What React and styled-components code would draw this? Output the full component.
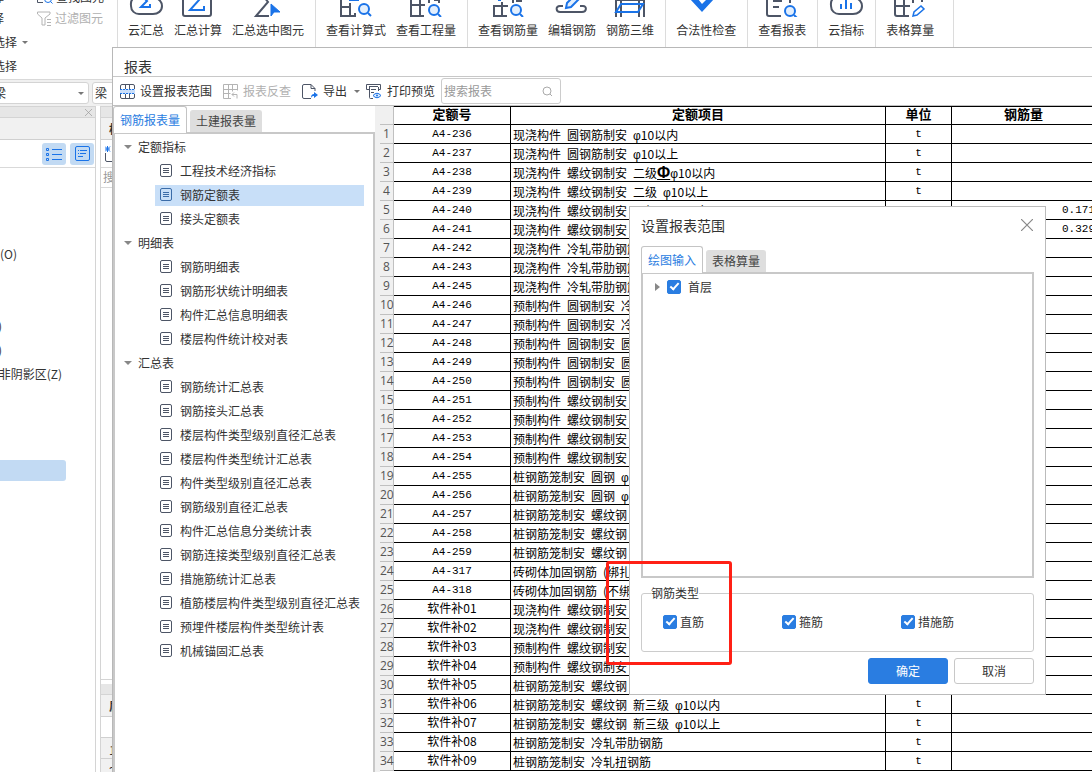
import React, { useState } from "react";
import styled, { createGlobalStyle } from "styled-components";

const GlobalStyle = createGlobalStyle`
  * {
    box-sizing: border-box;
  }
  body {
    margin: 0;
    overflow: hidden;
    background: #fff;
    color: #333;
    font-family: "Noto Sans CJK SC", sans-serif;
    font-size: 12px;
    line-height: 18px;
  }
  button, input, select {
    font: inherit;
    color: inherit;
    margin: 0;
  }
`;

const Screen = styled.div`
  position: relative;
  height: 100vh;
  overflow: hidden;
`;

/* ---------- main window ---------- */

const Main = styled.div`
  display: flex;
  flex-direction: column;
  height: 100%;
`;

const Ribbon = styled.header`
  display: flex;
  height: 80px;
  border-bottom: 1px solid #d9d9d9;
`;

const SelectTools = styled.div`
  width: 118px;
  margin-top: -18px;
  border-right: 1px solid #dcdcdc;
  overflow: hidden;
`;

const ToolLine = styled.div`
  display: flex;
  align-items: ${(props) => (props.$low ? "flex-end" : "center")};
  height: 24px;
`;

const ToolCut = styled.button`
  display: flex;
  justify-content: flex-end;
  width: ${(props) => (props.$short ? 4 : 17)}px;
  margin-right: ${(props) => (props.$short ? 33 : 5)}px;
  padding: 0;
  border: none;
  background: none;
  white-space: nowrap;
  overflow: hidden;
`;

const ToolButton = styled.button`
  display: flex;
  align-items: center;
  gap: 3px;
  padding: 0;
  border: none;
  background: none;
  white-space: nowrap;
  color: ${(props) => (props.disabled ? "#b0b0b0" : "#333")};
`;

const Caret = styled.span`
  border: 3px solid transparent;
  border-top-color: #777;
  border-bottom: none;
`;

const Group = styled.div`
  display: flex;
  gap: 10px;
  min-width: ${(props) => (props.$wide ? 78 : 0)}px;
  padding: 0 11px 0 10px;
  border-right: 1px solid #dcdcdc;
`;

const RibbonButton = styled.button`
  display: flex;
  flex-direction: column;
  align-items: center;
  gap: 4px;
  padding: 0;
  border: none;
  background: none;
  white-space: nowrap;

  svg {
    display: block;
  }
`;

const ComboBar = styled.div`
  display: flex;
  gap: 3px;
  margin-left: -14px;
  padding: 2px 0;
  background: #f0f0f0;
`;

const Combo = styled.select`
  appearance: none;
  width: 103px;
  height: 22px;
  padding: 0 3px 0 ${(props) => props.$indent}px;
  border: 1px solid #d4d4d4;
  border-radius: 3px;
  background: #fff;
`;

const ComboBox = styled.label`
  display: flex;
  align-items: center;

  span {
    margin-left: -11px;
    margin-right: 5px;
  }
`;

const Docks = styled.div`
  display: flex;
  flex: 1;
  gap: 4px;
  min-height: 0;
`;

const Dock = styled.aside`
  width: ${(props) => props.$width}px;
  border: 1px solid #d4d4d4;
  border-left-width: ${(props) => (props.$first ? 0 : 1)}px;
  border-bottom: none;
`;

const DockTitle = styled.div`
  display: flex;
  align-items: center;
  justify-content: flex-end;
  height: 11px;
  padding-right: 3px;
  background: #e6e6e6;
  border-bottom: 1px solid #d4d4d4;
`;

const DockBand = styled.div`
  display: flex;
  align-items: center;
  height: 22px;
  padding-left: 8px;
  overflow: hidden;
  background: #f1f1f1;
  border-bottom: 1px solid #d0d0d0;
  font-weight: bold;
`;

const DockTools = styled.div`
  display: flex;
  align-items: center;
  justify-content: ${(props) => (props.$start ? "flex-start" : "flex-end")};
  gap: 4px;
  height: 28px;
  padding: 0 1px 0 4px;
  border-bottom: 1px solid #d9d9d9;
`;

const ToggleButton = styled.button`
  display: flex;
  align-items: center;
  justify-content: center;
  width: 24px;
  height: 22px;
  padding: 0;
  border: none;
  border-radius: 3px;
  background: #c2daf3;
`;

const DockSearch = styled.div`
  height: 20px;
  padding-left: 2px;
  color: #999;
  border-bottom: 1px solid #d9d9d9;
`;

const DockBlank = styled.div`
  height: 492px;
  border-bottom: 1px solid #d4d4d4;
  margin-bottom: 4px;
`;

const DockRow = styled.div`
  height: 21px;
  padding: 3px 0 0 8px;
  background: ${(props) => (props.$blank ? "#fff" : "#f1f1f1")};
  border-bottom: 1px solid #d0d0d0;
`;

const NavList = styled.ul`
  margin: 0;
  padding: 74px 0 0;
  list-style: none;
`;

const NavItem = styled.li`
  display: flex;
  align-items: center;
  justify-content: flex-end;
  width: ${(props) => props.$width}px;
  height: 24px;
  white-space: nowrap;
  overflow: hidden;
`;

const NavMark = styled.li`
  width: 66px;
  height: 21px;
  margin-top: 2px;
  border-radius: 0 3px 3px 0;
  background: #c2daf3;
`;

/* ---------- report window ---------- */

const ReportWindow = styled.section`
  position: absolute;
  top: 47px;
  left: 112px;
  right: 0;
  bottom: 0;
  display: flex;
  flex-direction: column;
  background: #fff;
  border-top: 1px solid #b8b8b8;
  border-left: 1px solid #b8b8b8;
`;

const WindowTitle = styled.h1`
  height: 29px;
  margin: 0;
  padding: 9px 0 0 11px;
  border-bottom: 1px solid #c8c8c8;
  font-size: 14px;
  font-weight: normal;
`;

const Toolbar = styled.div`
  display: flex;
  align-items: center;
  height: 29px;
  padding-left: 7px;
  border-bottom: 1px solid #c0c0c0;
`;

const ToolbarButton = styled(ToolButton)`
  gap: 5px;
  margin-left: ${(props) => props.$left || 0}px;
  margin-right: ${(props) => props.$right}px;
`;

const SearchBox = styled.label`
  display: flex;
  align-items: center;
  width: 120px;
  height: 26px;
  padding: 0 7px 0 2px;
  border: 1px solid #ccc;
  border-radius: 3px;

  input {
    flex: 1;
    width: 0;
    padding: 0;
    border: none;
    outline: none;
  }
  input::placeholder {
    color: #999;
  }
`;

const Body = styled.div`
  display: flex;
  flex: 1;
  min-height: 0;
  background: #f0f0f0;
`;

const TreeSide = styled.div`
  display: flex;
  flex-direction: column;
  width: 262px;
  margin-right: 5px;
  background: #fff;
`;

const TabRow = styled.div`
  display: flex;
  align-items: flex-end;
  gap: 3px;
`;

const Tab = styled.button`
  position: relative;
  height: ${(props) => (props.$active ? 27 : 22)}px;
  margin-bottom: ${(props) => (props.$active ? -1 : 0)}px;
  padding: ${(props) => (props.$active ? "0 6px" : "0 5px 2px")};
  border: 1px solid ${(props) => (props.$active ? "#c4c4c4" : "#dedede")};
  border-bottom: none;
  border-radius: 3px 3px 0 0;
  background: ${(props) => (props.$active ? "#fff" : "#dedede")};
  color: ${(props) => (props.$active ? "#2a7de1" : "#444")};
`;

const Pane = styled.div`
  flex: 1;
  min-height: 0;
  overflow: hidden;
  border: 2px solid #c8c8c8;
  border-bottom-width: ${(props) => (props.$open ? 0 : 2)}px;
`;

const Tree = styled.ul`
  margin: 0;
  padding: 1px 9px 0;
  list-style: none;
`;

const TreeGroup = styled.div`
  display: flex;
  align-items: center;
  gap: 6px;
  height: 24px;
`;

const TreeArrow = styled.span`
  border: 4px solid transparent;
  border-top-color: #888;
  border-bottom: none;
`;

const SubTree = styled.ul`
  margin: 0;
  padding: 0 0 0 31px;
  list-style: none;

  li {
    display: flex;
    height: 24px;
    padding: 2px 0 1px;
  }
`;

const TreeItem = styled.button`
  display: flex;
  flex: 1;
  align-items: center;
  gap: 8px;
  padding: 0 0 2px 5px;
  border: none;
  background: ${(props) => (props.$selected ? "#c8dff8" : "none")};
  white-space: nowrap;
`;

const Sheet = styled.div`
  flex: 1;
  min-width: 0;
  overflow: hidden;
  background: #fff;
`;

const Table = styled.table`
  table-layout: fixed;
  width: 716px;
  border-collapse: separate;
  border-spacing: 0;
  color: #000;
`;

const HeadCell = styled.th`
  height: 19px;
  padding: 0 0 3px;
  border: 1px solid #000;
  border-left: none;
  font-size: 13px;
  line-height: 14px;
`;

const RowHead = styled.th`
  height: 19px;
  padding: 0;
  border-right: 1px solid #c0c0c0;
  border-bottom: 1px solid #c0c0c0;
  background: #f0f0f0;
  color: #555;
  font-family: "Open Sans", sans-serif;
  font-weight: normal;
  line-height: 18px;
`;

const Cell = styled.td`
  height: 19px;
  padding: 0 0 2px;
  border-right: 1px solid #000;
  border-bottom: 1px solid #000;
  line-height: 16px;
  white-space: nowrap;
  overflow: hidden;
  text-align: ${(props) => props.$align || "center"};
`;

const ItemCell = styled(Cell)`
  padding: 0 0 0 2px;
`;

const Mono = styled.span`
  font-family: "Liberation Mono", monospace;
  font-size: 11px;
  line-height: 1px;
  vertical-align: 1px;
`;

const Parts = styled.div`
  display: flex;
  gap: 6px;
  padding-top: 2px;
`;

const Phi = styled.span`
  font-family: "Liberation Sans", sans-serif;
  line-height: 1px;
`;

const Mark = styled.u`
  font-family: "Liberation Sans", sans-serif;
  font-size: 16px;
  font-weight: bold;
  line-height: 1px;
`;

/* ---------- range dialog ---------- */

const Dialog = styled.section`
  position: absolute;
  top: 206px;
  left: 629px;
  width: 417px;
  display: flex;
  flex-direction: column;
  padding: 0 11px 10px;
  background: #fff;
  border: 1px solid #bbb;
`;

const DialogHead = styled.div`
  display: flex;
  align-items: center;
  justify-content: space-between;
  height: 39px;
  padding: 0 1px 3px 0;

  h2 {
    margin: 0;
    font-size: 14px;
    font-weight: normal;
  }
`;

const CloseButton = styled.button`
  display: flex;
  padding: 0;
  border: none;
  background: none;
`;

const FloorPane = styled(Pane)`
  flex: none;
  height: 306px;
  padding: 4px 12px;
`;

const FloorRow = styled.div`
  display: flex;
  align-items: center;
  gap: 7px;
  height: 18px;
`;

const FloorArrow = styled.span`
  border: 4px solid transparent;
  border-left: 5px solid #888;
  border-right: none;
`;

const Check = styled.label`
  display: flex;
  align-items: center;
  gap: ${(props) => props.$gap || 3}px;

  input {
    appearance: none;
    width: 14px;
    height: 14px;
    border: 1px solid #2a7de1;
    border-radius: 2px;
    background: #fff;
  }
  input:checked {
    background: #2a7de1;
  }
  input:checked::after {
    content: "";
    display: block;
    box-sizing: border-box;
    width: 5px;
    height: 9px;
    margin-left: 4px;
    border: solid #fff;
    border-width: 0 2px 2px 0;
    transform: rotate(42deg);
  }
`;

const BarTypes = styled.fieldset`
  display: grid;
  grid-template-columns: 119px 119px auto;
  align-content: start;
  height: 68px;
  margin: 6px 0 0;
  padding: 11px 21px 0;
  border: 1px solid #ccc;
  border-radius: 3px;

  legend {
    margin-left: -12px;
    padding: 0;
  }
`;

const Actions = styled.div`
  display: flex;
  justify-content: flex-end;
  gap: 6px;
  margin-top: 6px;
`;

const ActionButton = styled.button`
  width: 80px;
  height: 26px;
  padding: 0;
  border: 1px solid ${(props) => (props.$primary ? "#2a7de1" : "#c8c8c8")};
  border-radius: 3px;
  background: ${(props) => (props.$primary ? "#2a7de1" : "#fff")};
  color: ${(props) => (props.$primary ? "#fff" : "#333")};
`;

const RedFrame = styled.div`
  position: absolute;
  top: 561px;
  left: 606px;
  width: 126px;
  height: 104px;
  border: 3px solid #ff2015;
  border-radius: 3px;
  pointer-events: none;
`;

/* ---------- drawings ---------- */

const DARK = "#4d5566";
const BLUE = "#1a73e8";

const lens = (x, y) => (
  <g stroke={BLUE} fill="#e3effd">
    <circle cx={x} cy={y} r="5" />
    <path d={`M${x + 4} ${y + 4}l3 3`} />
  </g>
);

const ribbonArt = {
  cloudSum: (
    <>
      <path d="M6-2C2 0 3 4 3 6c0 5 4 8 8 8h14c5 0 9-3 9-8 0-3-1-5-4-7" />
      <path d="M15-3l4 4-6 6h9V4" stroke={BLUE} />
    </>
  ),
  boxSum: (
    <>
      <path d="M3-2v16q0 2 2 2h24q2 0 2-2V-2" />
      <path d="M14-5l5 5-9 10h14V6" stroke={BLUE} />
    </>
  ),
  pickSum: (
    <>
      <path d="M14-3l4 5L6 16h13" />
      <path d="M21 4v12l3-4h6z" fill={BLUE} stroke={BLUE} strokeWidth="1" />
    </>
  ),
  formula: (
    <>
      <path d="M3-2v18h14v-3M3 7h9v9M12 7V3" />
      <path d="M11 0h10" stroke={BLUE} />
      {lens(26, 9)}
    </>
  ),
  quantity: (
    <>
      <path d="M3-2v18h13M3 5h14M12-2v18M21-2v5M26 0h5v3" />
      {lens(26, 10)}
    </>
  ),
  rebar: (
    <>
      <path d="M4 5v11h13M4 6h14M12 2v14M23-2v5M26 1h6" />
      <path d="M8 0h3" stroke={BLUE} />
      {lens(26, 10)}
    </>
  ),
  edit: (
    <>
      <path d="M9 6H6C1 6 2 12 6 12h22c5 0 5-6 1-6h-3" />
      <path d="M13 3l8-8 4 4-8 8-5 1z" stroke={BLUE} fill="#e3effd" />
    </>
  ),
  solid: (
    <>
      <path d="M4-1v18M9-1v18M27-1v18M32-1v18M4 0h28" />
      <path d="M9 4h22l-5 8H4z" stroke={BLUE} />
    </>
  ),
  legal: <path d="M2-1h8l4 5 5-5h7L14 12z" fill={BLUE} stroke="none" />,
  report: (
    <>
      <path d="M3-2v16q0 2 2 2h12M9 1h9M9 7h6M26-2v5" />
      {lens(26, 11)}
    </>
  ),
  cloudIndex: (
    <>
      <path d="M6-2C2 0 3 4 3 6c0 5 4 8 8 8h14c5 0 9-3 9-8 0-3-1-5-4-7" />
      <path d="M13 4v5M18 0v9M23 3v6" stroke={BLUE} />
    </>
  ),
  grid: (
    <>
      <path d="M3-2v16q0 2 2 2h12M3 6h15M12-2v18M21-2v5M30-2v4" />
      <path d="M21 16l1-4 7-6 3 3-7 6z" stroke={BLUE} fill="#fff" strokeWidth="1.5" />
    </>
  ),
};

const RibbonIcon = ({ name }) => (
  <svg width="36" height="17" viewBox="0 0 36 17" fill="none" stroke={DARK} strokeWidth="2">
    {ribbonArt[name]}
  </svg>
);

const DocIcon = ({ selected }) => (
  <svg width="12" height="13" viewBox="0 0 12 13" fill="none" stroke={selected ? "#3b6ca8" : "#4d5566"}>
    <rect x=".5" y=".5" width="11" height="12" rx="1.5" />
    <path d="M3 4.500h6M3 6.500h6M3 8.500h6" />
  </svg>
);

const RangeIcon = () => (
  <svg width="15" height="15" viewBox="0 0 15 15" fill="none" stroke={DARK}>
    <path d="M.5 5V2q0-1.500 1.500-1.500h11q1.500 0 1.500 1.500v3M.5 10v3q0 1.500 1.500 1.500h11q1.500 0 1.500-1.500v-3M5.500.5V5M9.500.5V5M5.500 10v4.500M9.500 10v4.500" />
    <rect y="5" width="15" height="5" fill="#c9defa" stroke="none" />
    <path d="M0 5.500h15M0 9.500h15" stroke={BLUE} strokeDasharray="2 1" />
  </svg>
);

const ReverseIcon = () => (
  <svg width="15" height="15" viewBox="0 0 15 15" fill="none" stroke="#b4b4b4">
    <path d="M8 14.500H.5V.5h14v6M.5 5.500h14M.5 9.500h7M5.500.5v14M9.500.5v7M9 10.500h5v4M11 8.500l-2 2 2 2" />
  </svg>
);

const ExportIcon = () => (
  <svg width="16" height="15" viewBox="0 0 16 15" fill="none" stroke={DARK}>
    <path d="M9 14.500H2q-1.500 0-1.500-1.500V2Q.5.5 2 .5h7l4 4V7M9 .5v4h4" />
    <path d="M9 14c0-3 1-4 3-4V8l4 3-4 3v-2c-1 0-2 0-3 2z" fill={BLUE} stroke="none" />
  </svg>
);

const PrintIcon = () => (
  <svg width="16" height="15" viewBox="0 0 16 15" fill="none" stroke={DARK}>
    <path d="M3 5.500H.5v-5h14v5H12M3 2.500h9M3.500 2.500v11q0 1 1 1H7M12.500 3v4M5 5.500h5M5 8.500h3" />
    <path d="M7 11.500q4-4.500 8 0q-4 4.500-8 0z" stroke={BLUE} fill="#e3effd" />
    <circle cx="11" cy="11.500" r="1" fill={BLUE} stroke="none" />
  </svg>
);

const SearchIcon = () => (
  <svg width="11" height="11" viewBox="0 0 11 11" fill="none" stroke="#aaa">
    <circle cx="5" cy="5" r="4" />
    <path d="M8 8l2 2" />
  </svg>
);

const FindIcon = () => (
  <svg width="16" height="16" viewBox="0 0 16 16" fill="none" stroke={DARK}>
    <path d="M.5 13.500V3l4-2.500L8 3v4M.5 13.500H6" />
    <circle cx="11" cy="10" r="3.500" stroke={BLUE} />
    <path d="M13.500 12.500l2 2" stroke={BLUE} />
  </svg>
);

const FilterIcon = () => (
  <svg width="15" height="15" viewBox="0 0 15 15" fill="none" stroke="#b4b4b4">
    <path d="M.5 1v2L5 7v7h3V7l5-4V1zM10 8.500h4M10 11.500h4M10 14.500h4" />
  </svg>
);

const CloseIcon = ({ size, color }) => (
  <svg width={size} height={size} viewBox="0 0 10 10" fill="none" stroke={color}>
    <path d="M0 0l10 10M10 0L0 10" />
  </svg>
);

const ListIcon = () => (
  <svg width="16" height="14" viewBox="0 0 16 14" fill="none" stroke={BLUE}>
    <path d="M6 2.500h10M6 7.500h10M6 12.500h10M.5 1.500h2v2h-2zM.5 6.500h2v2h-2zM.5 11.500h2v2h-2z" />
  </svg>
);

const NoteIcon = () => (
  <svg width="15" height="15" viewBox="0 0 15 15" fill="none" stroke={BLUE}>
    <rect x=".5" y=".5" width="14" height="14" rx="1.500" />
    <path d="M3 4.500h1M5 4.500h7M3 7.500h1M5 7.500h6M3 10.500h5" />
  </svg>
);

const MarqueeIcon = () => (
  <svg width="15" height="16" viewBox="0 0 15 16" fill="none" stroke={DARK}>
    <path d="M.5 7v7q0 1.500 1.500 1.500h12M7 1.500h3" />
    <path d="M0 .5l5 5M5 .5l-5 5M2.500 0v6M0 3h5" stroke={BLUE} />
  </svg>
);

/* ---------- data ---------- */

const ribbonGroups = [
  [["cloudSum", "云汇总"], ["boxSum", "汇总计算"], ["pickSum", "汇总选中图元"]],
  [["formula", "查看计算式"], ["quantity", "查看工程量"]],
  [["rebar", "查看钢筋量"], ["edit", "编辑钢筋"], ["solid", "钢筋三维"]],
  [["legal", "合法性检查"]],
  [["report", "查看报表"]],
  [["cloudIndex", "云指标"]],
  [["grid", "表格算量"]],
];

const treeData = [
  { name: "定额指标", items: ["工程技术经济指标", "钢筋定额表", "接头定额表"] },
  {
    name: "明细表",
    items: ["钢筋明细表", "钢筋形状统计明细表", "构件汇总信息明细表", "楼层构件统计校对表"],
  },
  {
    name: "汇总表",
    items: [
      "钢筋统计汇总表",
      "钢筋接头汇总表",
      "楼层构件类型级别直径汇总表",
      "楼层构件类型统计汇总表",
      "构件类型级别直径汇总表",
      "钢筋级别直径汇总表",
      "构件汇总信息分类统计表",
      "钢筋连接类型级别直径汇总表",
      "措施筋统计汇总表",
      "植筋楼层构件类型级别直径汇总表",
      "预埋件楼层构件类型统计表",
      "机械锚固汇总表",
    ],
  },
];

const rows = [
  ["A4-236", "现浇构件 圆钢筋制安 φ10以内"],
  ["A4-237", "现浇构件 圆钢筋制安 φ10以上"],
  ["A4-238", "现浇构件 螺纹钢制安 二级Φφ10以内"],
  ["A4-239", "现浇构件 螺纹钢制安 二级 φ10以上"],
  ["A4-240", "现浇构件 螺纹钢制安 三级 φ10以内", "0.171"],
  ["A4-241", "现浇构件 螺纹钢制安 三级 φ10以上", "0.329"],
  ["A4-242", "现浇构件 冷轧带肋钢筋"],
  ["A4-243", "现浇构件 冷轧带肋钢筋"],
  ["A4-245", "现浇构件 冷轧带肋钢筋"],
  ["A4-246", "预制构件 圆钢制安 冷拔"],
  ["A4-247", "预制构件 圆钢制安 冷拔"],
  ["A4-248", "预制构件 圆钢制安 圆钢"],
  ["A4-249", "预制构件 圆钢制安 圆钢"],
  ["A4-250", "预制构件 圆钢制安 圆钢"],
  ["A4-251", "预制构件 螺纹钢制安"],
  ["A4-252", "预制构件 螺纹钢制安"],
  ["A4-253", "预制构件 螺纹钢制安"],
  ["A4-254", "预制构件 螺纹钢制安"],
  ["A4-255", "桩钢筋笼制安 圆钢 φ10以内"],
  ["A4-256", "桩钢筋笼制安 圆钢 φ10以上"],
  ["A4-257", "桩钢筋笼制安 螺纹钢"],
  ["A4-258", "桩钢筋笼制安 螺纹钢"],
  ["A4-259", "桩钢筋笼制安 螺纹钢"],
  ["A4-317", "砖砌体加固钢筋 (绑扎)"],
  ["A4-318", "砖砌体加固钢筋 (不绑扎)"],
  ["软件补01", "现浇构件 螺纹钢制安"],
  ["软件补02", "现浇构件 螺纹钢制安"],
  ["软件补03", "预制构件 螺纹钢制安"],
  ["软件补04", "预制构件 螺纹钢制安"],
  ["软件补05", "桩钢筋笼制安 螺纹钢"],
  ["软件补06", "桩钢筋笼制安 螺纹钢 新三级 φ10以内"],
  ["软件补07", "桩钢筋笼制安 螺纹钢 新三级 φ10以上"],
  ["软件补08", "桩钢筋笼制安 冷轧带肋钢筋"],
  ["软件补09", "桩钢筋笼制安 冷轧扭钢筋"],
];

const MainWindow = () => (
  <Main>
    <Ribbon>
      <SelectTools>
        <ToolLine $low>
          <ToolCut $short>选择</ToolCut>
          <ToolButton>
            <FindIcon />
            查找图元
          </ToolButton>
        </ToolLine>
        <ToolLine>
          <ToolCut $short>选择</ToolCut>
          <ToolButton disabled>
            <FilterIcon />
            过滤图元
          </ToolButton>
        </ToolLine>
        <ToolLine>
          <ToolCut>选择</ToolCut>
          <Caret />
        </ToolLine>
        <ToolLine>
          <ToolCut>选择</ToolCut>
        </ToolLine>
      </SelectTools>
      {ribbonGroups.map((group, index) => (
        <Group key={index} $wide={index === ribbonGroups.length - 1}>
          {group.map(([icon, label]) => (
            <RibbonButton key={label}>
              <RibbonIcon name={icon} />
              {label}
            </RibbonButton>
          ))}
        </Group>
      ))}
    </Ribbon>
    <ComboBar>
      <ComboBox>
        <Combo $indent={7} aria-label="构件分类">
          <option>梁</option>
        </Combo>
        <Caret />
      </ComboBox>
      <Combo $indent={2} aria-label="构件类型">
        <option>梁</option>
      </Combo>
    </ComboBar>
    <Docks>
      <Dock $width={96} $first>
        <DockTitle>
          <CloseIcon size={7} color="#999" />
        </DockTitle>
        <DockBand />
        <DockTools>
          <ToggleButton aria-label="列表">
            <ListIcon />
          </ToggleButton>
          <ToggleButton aria-label="详情">
            <NoteIcon />
          </ToggleButton>
        </DockTools>
        <NavList>
          <NavItem $width={17}>(O)</NavItem>
          <NavItem />
          <NavItem />
          <NavItem $width={2}>)</NavItem>
          <NavItem $width={2}>)</NavItem>
          <NavItem $width={62}>非阴影区(Z)</NavItem>
          <NavItem />
          <NavItem />
          <NavItem />
          <NavMark />
        </NavList>
      </Dock>
      <Dock $width={200}>
        <DockTitle />
        <DockBand>构件列表</DockBand>
        <DockTools $start>
          <MarqueeIcon />
        </DockTools>
        <DockSearch>搜索</DockSearch>
        <DockBlank />
        <DockTitle />
        <DockBand>属性列表</DockBand>
        <DockRow $blank />
        <DockRow>1</DockRow>
        <DockRow>2</DockRow>
      </Dock>
    </Docks>
  </Main>
);

const ItemName = ({ text }) => (
  <Parts>
    {text.split(" ").map((part, index) => (
      <span key={index}>
        {part.split(/([Φφ])/).map((piece, i) => {
          if (piece === "Φ") return <Mark key={i}>Φ</Mark>;
          if (piece === "φ") return <Phi key={i}>φ</Phi>;
          return piece;
        })}
      </span>
    ))}
  </Parts>
);

const ReportTable = () => (
  <Table>
    <colgroup>
      <col width="14" />
      <col width="117" />
      <col width="375" />
      <col width="66" />
      <col width="144" />
    </colgroup>
    <thead>
      <tr>
        <RowHead />
        <HeadCell>定额号</HeadCell>
        <HeadCell>定额项目</HeadCell>
        <HeadCell>单位</HeadCell>
        <HeadCell>钢筋量</HeadCell>
      </tr>
    </thead>
    <tbody>
      {rows.map(([code, item, amount], index) => (
        <tr key={code}>
          <RowHead>{index + 1}</RowHead>
          <Cell>{code.startsWith("A") ? <Mono>{code}</Mono> : code}</Cell>
          <ItemCell $align="left">
            <ItemName text={item} />
          </ItemCell>
          <Cell>
            <Mono>t</Mono>
          </Cell>
          <Cell $align="right">
            <Mono>{amount}</Mono>
          </Cell>
        </tr>
      ))}
    </tbody>
  </Table>
);

const Reports = () => {
  const [selected, setSelected] = useState("钢筋定额表");
  return (
    <ReportWindow>
      <WindowTitle>报表</WindowTitle>
      <Toolbar>
        <ToolbarButton $right={11}>
          <RangeIcon />
          设置报表范围
        </ToolbarButton>
        <ToolbarButton $right={11} disabled>
          <ReverseIcon />
          报表反查
        </ToolbarButton>
        <ToolbarButton $right={7}>
          <ExportIcon />
          导出
        </ToolbarButton>
        <Caret />
        <ToolbarButton $left={6} $right={6}>
          <PrintIcon />
          打印预览
        </ToolbarButton>
        <SearchBox>
          <input type="text" placeholder="搜索报表" aria-label="搜索报表" />
          <SearchIcon />
        </SearchBox>
      </Toolbar>
      <Body>
        <TreeSide>
          <TabRow>
            <Tab $active>钢筋报表量</Tab>
            <Tab>土建报表量</Tab>
          </TabRow>
          <Pane $open>
            <Tree>
              {treeData.map((group) => (
                <li key={group.name}>
                  <TreeGroup>
                    <TreeArrow />
                    {group.name}
                  </TreeGroup>
                  <SubTree>
                    {group.items.map((name) => (
                      <li key={name}>
                        <TreeItem $selected={name === selected} onClick={() => setSelected(name)}>
                          <DocIcon selected={name === selected} />
                          {name}
                        </TreeItem>
                      </li>
                    ))}
                  </SubTree>
                </li>
              ))}
            </Tree>
          </Pane>
        </TreeSide>
        <Sheet>
          <ReportTable />
        </Sheet>
      </Body>
    </ReportWindow>
  );
};

const RangeDialog = () => (
  <Dialog role="dialog" aria-label="设置报表范围">
    <DialogHead>
      <h2>设置报表范围</h2>
      <CloseButton aria-label="关闭">
        <CloseIcon size={12} color="#888" />
      </CloseButton>
    </DialogHead>
    <TabRow>
      <Tab $active>绘图输入</Tab>
      <Tab>表格算量</Tab>
    </TabRow>
    <FloorPane>
      <FloorRow>
        <FloorArrow />
        <Check $gap={7}>
          <input type="checkbox" defaultChecked />
          首层
        </Check>
      </FloorRow>
    </FloorPane>
    <BarTypes>
      <legend>钢筋类型</legend>
      {["直筋", "箍筋", "措施筋"].map((name) => (
        <Check key={name}>
          <input type="checkbox" defaultChecked />
          {name}
        </Check>
      ))}
    </BarTypes>
    <Actions>
      <ActionButton $primary>确定</ActionButton>
      <ActionButton>取消</ActionButton>
    </Actions>
  </Dialog>
);

const App = () => (
  <>
    <GlobalStyle />
    <Screen>
      <MainWindow />
      <Reports />
      <RangeDialog />
      <RedFrame />
    </Screen>
  </>
);

export default App;
